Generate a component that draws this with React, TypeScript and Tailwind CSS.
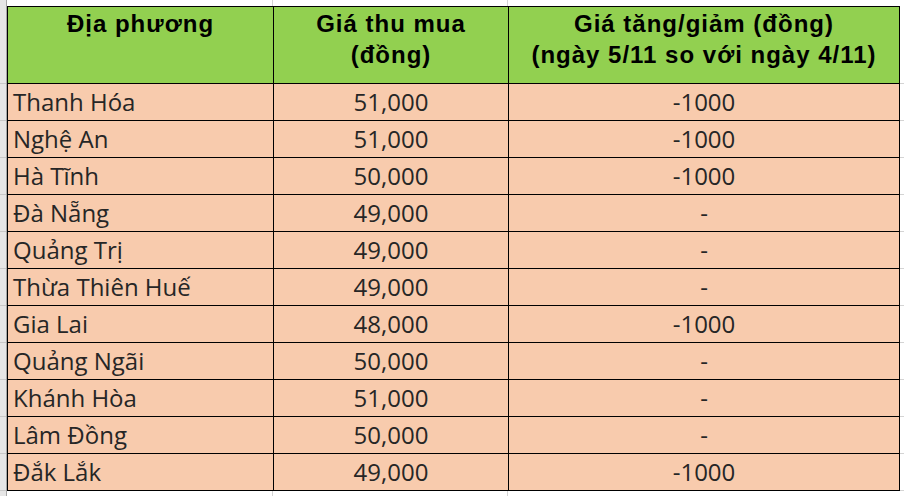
const ROWS: [string, string, string][] = [
  ["Thanh Hóa", "51,000", "-1000"],
  ["Nghệ An", "51,000", "-1000"],
  ["Hà Tĩnh", "50,000", "-1000"],
  ["Đà Nẵng", "49,000", "-"],
  ["Quảng Trị", "49,000", "-"],
  ["Thừa Thiên Huế", "49,000", "-"],
  ["Gia Lai", "48,000", "-1000"],
  ["Quảng Ngãi", "50,000", "-"],
  ["Khánh Hòa", "51,000", "-"],
  ["Lâm Đồng", "50,000", "-"],
  ["Đắk Lắk", "49,000", "-1000"],
];

const body = "font-['Open_Sans',sans-serif] text-[24px] text-[#262626]";
const head =
  "h-[76px] bg-[#92d050] pt-px text-center font-['Liberation_Sans',Arial,sans-serif] text-[24px] font-bold leading-[31px] tracking-[1px] text-black";

export default function App() {
  return (
    <div className="flex h-[496px] w-[904px] overflow-hidden bg-white">
      {/* row header gutter */}
      <div className="flex h-full w-[7px] flex-col border-r border-[#a6a6a6] bg-[#e6e6e6]">
        <div className="h-[84px] border-b border-[#c8c8c8]" />
        {ROWS.map((r) => (
          <div key={r[0]} className="h-[37px] shrink-0 border-b border-[#c8c8c8]" />
        ))}
      </div>

      <div className="flex w-[897px] flex-col">
        <div className="grid h-[6px] shrink-0 grid-cols-[266px_235px_396px]">
          <div className="border-r border-[#d4d4d4]" />
          <div className="border-r border-[#d4d4d4]" />
          <div />
        </div>

        <div className="flex">
          <div className="grid w-[893px] grid-cols-[265px_234px_390px] gap-px bg-black p-px">
            <div className={head}>Địa phương</div>
            <div className={head}>
              Giá thu mua
              <br />
              (đồng)
            </div>
            <div className={head}>
              Giá tăng/giảm (đồng)
              <br />
              (ngày 5/11 so với ngày 4/11)
            </div>
            {ROWS.map(([place, price, diff]) => (
              <div key={place} className="contents">
                <div className={`flex h-[36px] items-center bg-[#f8cbad] pl-[5px] ${body}`}>{place}</div>
                <div className={`flex h-[36px] items-center justify-center bg-[#f8cbad] ${body}`}>{price}</div>
                <div className={`flex h-[36px] items-center justify-center bg-[#f8cbad] ${body}`}>{diff}</div>
              </div>
            ))}
          </div>
          <div className="flex w-[4px] flex-col">
            <div className="h-[78px] border-b border-[#d4d4d4]" />
            {ROWS.map((r) => (
              <div key={r[0]} className="h-[37px] shrink-0 border-b border-[#d4d4d4]" />
            ))}
          </div>
        </div>

        <div className="grid h-[6px] shrink-0 grid-cols-[266px_235px_396px]">
          <div className="border-r border-[#d4d4d4]" />
          <div className="border-r border-[#d4d4d4]" />
          <div />
        </div>
      </div>
    </div>
  );
}
